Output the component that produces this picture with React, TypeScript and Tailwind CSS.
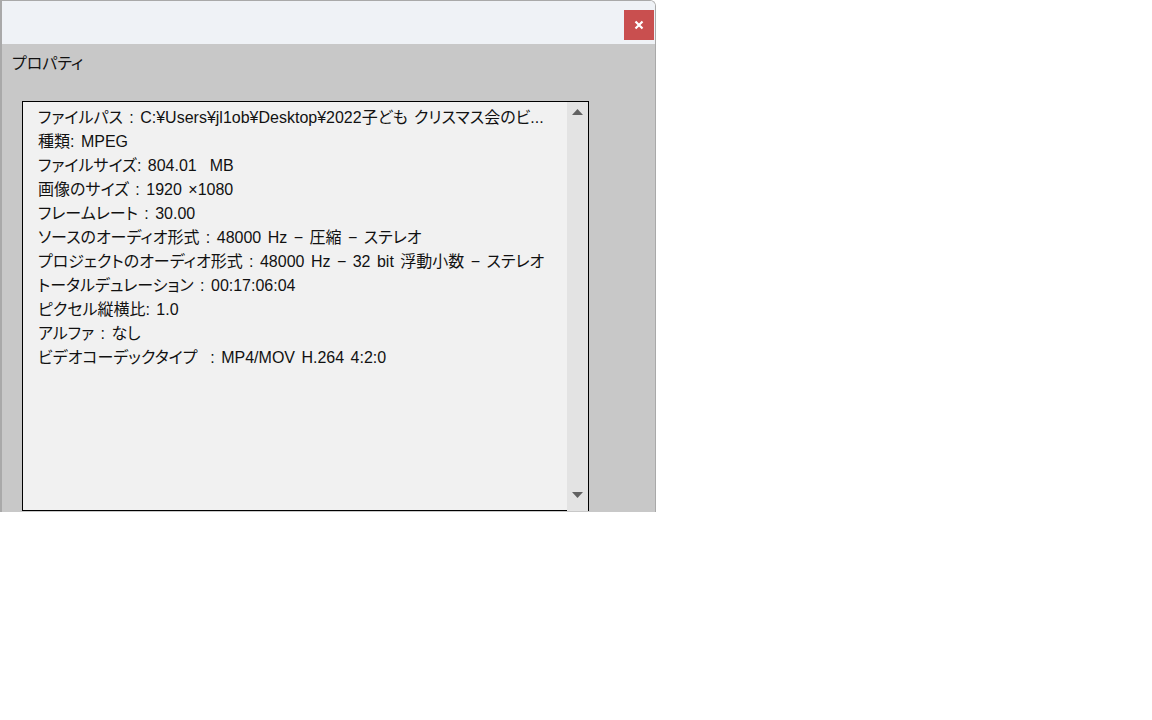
import React, { FC } from "react";

const lines = [
  "ファイルパス : C:¥Users¥jl1ob¥Desktop¥2022子ども クリスマス会のビ...",
  "種類: MPEG",
  "ファイルサイズ: 804.01  MB",
  "画像のサイズ : 1920 ×1080",
  "フレームレート : 30.00",
  "ソースのオーディオ形式 : 48000 Hz − 圧縮 − ステレオ",
  "プロジェクトのオーディオ形式 : 48000 Hz − 32 bit 浮動小数 − ステレオ",
  "トータルデュレーション : 00:17:06:04",
  "ピクセル縦横比: 1.0",
  "アルファ : なし",
  "ビデオコーデックタイプ  : MP4/MOV H.264 4:2:0",
];

const App: FC = () => {
  return (
    <div
      className="w-[1152px] h-[720px] bg-white [font-feature-settings:'palt']"
      style={{ fontFamily: '"Liberation Sans", "Noto Sans CJK JP", sans-serif' }}
    >
      <div className="w-[656px] h-[512px] flex flex-col border-l-2 border-t border-r border-[#a9a9a9] rounded-tr-md overflow-hidden">
        {/* title bar */}
        <div className="h-[43px] bg-[#eff2f6] flex items-start justify-end pr-[1px] pt-[9px]">
          <button className="w-[30px] h-[30px] bg-[#c94f4f] flex items-center justify-center">
            <svg width="10" height="10" viewBox="0 0 10 10">
              <path d="M1.5 1.5 L8.5 8.5 M8.5 1.5 L1.5 8.5" stroke="#fff" strokeWidth="2.2" />
            </svg>
          </button>
        </div>

        {/* body */}
        <div className="flex-1 bg-[#c8c8c8] flex flex-col">
          <div className="pl-[10px] pt-[8px] h-[57px] text-[16px] leading-[24px] text-[#111]">
            プロパティ
          </div>
          <div className="ml-[20px] w-[567px] h-[410px] flex border-l border-t border-r border-black">
            <div className="flex-1 bg-[#f1f1f1] border-b border-black pl-[15px] pt-[4px]">
              {lines.map((l, i) => (
                <div
                  key={i}
                  className="text-[16px] leading-[24px] text-[#111] whitespace-pre [word-spacing:2px]"
                >
                  {l}
                </div>
              ))}
            </div>
            <div className="w-[21px] bg-[#e3e3e3] flex flex-col items-center justify-between pt-[7px] pb-[13px]">
              <svg width="11" height="6" viewBox="0 0 11 6">
                <path d="M5.5 0 L11 6 L0 6 Z" fill="#616161" />
              </svg>
              <svg width="11" height="6" viewBox="0 0 11 6">
                <path d="M0 0 L11 0 L5.5 6 Z" fill="#616161" />
              </svg>
            </div>
          </div>
        </div>
      </div>
    </div>
  );
};

export default App;
